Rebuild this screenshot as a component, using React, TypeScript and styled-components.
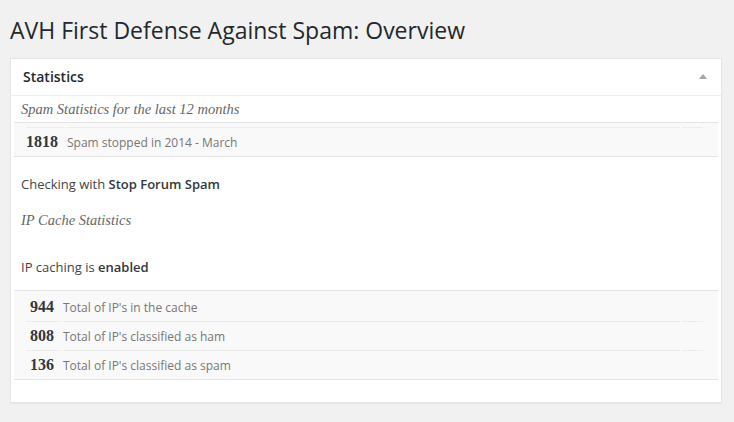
import React from 'react';
import styled, { createGlobalStyle } from 'styled-components';

const GlobalStyle = createGlobalStyle`
  html, body {
    margin: 0;
    padding: 0;
    background: #f1f1f1;
  }
  body {
    font-family: "Open Sans", "Liberation Sans", sans-serif;
    font-size: 13px;
    color: #444;
  }
`;

const Page = styled.div`
  width: 734px;
  height: 422px;
  box-sizing: border-box;
  padding: 16px 12px 0 10px;
  overflow: hidden;
`;

const Title = styled.h1`
  margin: 0;
  font-size: 23px;
  font-weight: 400;
  line-height: 29px;
  color: #23282d;
`;

const Panel = styled.div`
  margin-top: 13px;
  background: #fff;
  border: 1px solid #e5e5e5;
  box-shadow: 0 1px 1px rgba(0, 0, 0, 0.04);
`;

const PanelHeader = styled.div`
  display: flex;
  align-items: center;
  justify-content: space-between;
  padding: 8px 12px;
  border-bottom: 1px solid #eee;
`;

const PanelTitle = styled.h2`
  margin: 0;
  font-size: 14px;
  font-weight: 600;
  line-height: 20px;
  color: #23282d;
`;

const Toggle = styled.span`
  width: 0;
  height: 0;
  margin-right: 2px;
  margin-top: -2px;
  border-left: 4px solid transparent;
  border-right: 4px solid transparent;
  border-bottom: 5px solid #a0a5aa;
`;

const Inside = styled.div`
  display: flex;
  flex-direction: column;
  padding: 0 10px 22px;
`;

const SubHeading = styled.h3<{ $top: number }>`
  margin: ${p => p.$top}px 0 0;
  font-family: "Liberation Serif", serif;
  font-style: italic;
  font-weight: 400;
  font-size: 14.5px;
  line-height: 20px;
  color: #666;
`;

const Text = styled.p<{ $top: number }>`
  margin: ${p => p.$top}px 0 0;
  font-size: 13px;
  line-height: 20px;
  color: #444;

  strong {
    font-weight: 600;
    color: #32373c;
  }
`;

const StatsBlock = styled.div<{ $top: number; $padTop: number }>`
  margin: ${p => p.$top}px -7px 0;
  padding: ${p => p.$padTop}px 10px 0;
  background: #f9f9f9;
  border-top: 1px solid #e5e5e5;
  border-bottom: 1px solid #e5e5e5;
`;

const StatsTable = styled.table`
  width: 100%;
  border-collapse: separate;
  border-spacing: 2px 0;
`;

const Cell = styled.td<{ $lined: boolean }>`
  height: 28px;
  padding: 0;
  vertical-align: middle;
  border-top: ${p => (p.$lined ? '1px solid #ececec' : '0')};
`;

const NumCell = styled(Cell)`
  width: 28px;
  padding-right: 7px;
  text-align: right;
  white-space: nowrap;
  font-family: "Liberation Serif", serif;
  font-weight: 700;
  font-size: 16px;
  color: #32373c;
`;

const LabelCell = styled(Cell)`
  font-size: 12px;
  color: #777;
  white-space: nowrap;
`;

const SpareCell = styled(Cell)<{ $w: number }>`
  width: ${p => p.$w}px;
`;

interface Stat {
  value: number;
  label: string;
}

const StatRows: React.FC<{ rows: Stat[]; lineFirst: boolean }> = ({ rows, lineFirst }) => (
  <StatsTable>
    <tbody>
      {rows.map((r, i) => {
        const lined = i > 0 || lineFirst;
        return (
          <tr key={r.label}>
            <NumCell $lined={lined}>{r.value}</NumCell>
            <LabelCell $lined={lined}>{r.label}</LabelCell>
            <SpareCell $lined={lined} $w={21} />
            <SpareCell $lined={lined} $w={1} />
          </tr>
        );
      })}
    </tbody>
  </StatsTable>
);

const spamRows: Stat[] = [{ value: 1818, label: 'Spam stopped in 2014 - March' }];

const cacheRows: Stat[] = [
  { value: 944, label: "Total of IP's in the cache" },
  { value: 808, label: "Total of IP's classified as ham" },
  { value: 136, label: "Total of IP's classified as spam" },
];

export default function App() {
  return (
    <>
      <GlobalStyle />
      <Page>
        <Title>AVH First Defense Against Spam: Overview</Title>
        <Panel>
          <PanelHeader>
            <PanelTitle>Statistics</PanelTitle>
            <Toggle />
          </PanelHeader>
          <Inside>
            <SubHeading $top={3}>Spam Statistics for the last 12 months</SubHeading>
            <StatsBlock $top={3} $padTop={4}>
              <StatRows rows={spamRows} lineFirst />
            </StatsBlock>
            <Text $top={17}>
              Checking with <strong>Stop Forum Spam</strong>
            </Text>
            <SubHeading $top={16}>IP Cache Statistics</SubHeading>
            <Text $top={27}>
              IP caching is <strong>enabled</strong>
            </Text>
            <StatsBlock $top={13} $padTop={2}>
              <StatRows rows={cacheRows} lineFirst={false} />
            </StatsBlock>
          </Inside>
        </Panel>
      </Page>
    </>
  );
}
